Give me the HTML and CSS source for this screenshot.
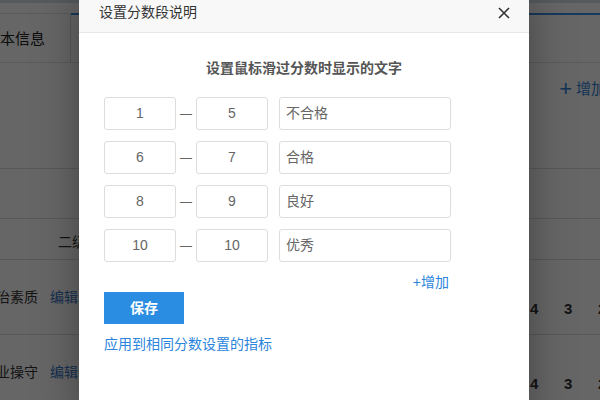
FILE: index.html
```html
<!DOCTYPE html>
<html lang="zh">
<head>
<meta charset="utf-8">
<title>设置分数段说明</title>
<link rel="stylesheet" href="styles.css">
</head>
<body>
<div class="page">
  <div class="topstrip"></div>
  <div class="tabs">
    <div class="tab">基本信息</div>
    <div class="tab-active"></div>
  </div>
  <div class="toolbar"><span class="add-main"><span class="plus">+</span>增加</span></div>
  <div class="table">
    <div class="trow thead"></div>
    <div class="trow tlevel"><span class="lvl">二级</span></div>
    <div class="trow titem">
      <span class="iname">政治素质</span><span class="edit">编辑</span>
      <span class="nums"><b>4</b><b>3</b><b>2</b></span>
    </div>
    <div class="trow titem">
      <span class="iname">职业操守</span><span class="edit">编辑</span>
      <span class="nums"><b>4</b><b>3</b><b>2</b></span>
    </div>
  </div>
</div>
<div class="overlay"></div>
<div class="modal">
  <div class="modal-head">
    <span class="modal-title">设置分数段说明</span>
    <svg class="close" width="12" height="12" viewBox="0 0 12 12"><path d="M1 1L11 11M11 1L1 11" stroke="#333" stroke-width="1.6" fill="none"/></svg>
  </div>
  <div class="modal-body">
    <div class="subtitle">设置鼠标滑过分数时显示的文字</div>
    <div class="rows">
      <div class="row"><div class="box num">1</div><span class="dash">—</span><div class="box num">5</div><div class="box txt">不合格</div></div>
      <div class="row"><div class="box num">6</div><span class="dash">—</span><div class="box num">7</div><div class="box txt">合格</div></div>
      <div class="row"><div class="box num">8</div><span class="dash">—</span><div class="box num">9</div><div class="box txt">良好</div></div>
      <div class="row"><div class="box num">10</div><span class="dash">—</span><div class="box num">10</div><div class="box txt">优秀</div></div>
    </div>
    <div class="addrow"><span class="add">+增加</span></div>
    <div class="btn">保存</div>
    <div class="apply">应用到相同分数设置的指标</div>
  </div>
</div>
</body>
</html>
```

FILE: styles.css
```css
* { box-sizing: border-box; }
html, body { margin: 0; padding: 0; }
body {
  width: 600px; height: 400px; overflow: hidden; position: relative;
  font-family: "Liberation Sans", "Noto Sans CJK SC", sans-serif;
  font-size: 14px; color: #333; background: #fff;
}
.page { width: 600px; height: 400px; overflow: hidden; }
.topstrip { height: 13px; border-top: 3px solid #d8e0e8; }
.tabs { height: 50px; display: flex; border-top: 1px solid #e4e4e4; border-bottom: 1px solid #e4e4e4; }
.tab {
  width: 86px; margin-left: -15px; margin-top: -1px; height: 50px;
  border-right: 1px solid #ddd; line-height: 52px; font-size: 15px; color: #222; padding-left: 0;
}
.tab-active { flex: 1; border-top: 2px solid #3a8ee6; margin-top: -1px; }
.toolbar { height: 105px; display: flex; justify-content: flex-end; padding-top: 16px; }
.add-main { color: #3080d8; font-size: 15px; line-height: 20px; margin-right: -6px; }
.plus { font-size: 22px; margin-right: 4px; vertical-align: -2px; }
.table { border-top: 1px solid #ddd; }
.trow { border-bottom: 1px solid #ddd; display: flex; align-items: center; }
.thead { height: 50px; }
.tlevel { height: 41px; justify-content: flex-start; }
.lvl { margin-left: 58px; margin-top: 4px; font-size: 14px; }
.titem { height: 75px; position: relative; }
.iname { margin-left: -18px; font-size: 14px; margin-top: -3px; }
.edit { color: #3a78c8; margin-left: 12px; margin-top: -3px; }
.nums { margin-left: auto; margin-right: -11px; display: flex; gap: 21px; margin-top: 22px; font-size: 15px; }
.nums b { width: 13px; }

.overlay { position: absolute; inset: 0; background: rgba(0,0,0,0.6); }
.modal {
  position: absolute; left: 79px; top: -8px; width: 450px; height: 430px;
  background: #fff; box-shadow: 0 0 40px rgba(0,0,0,0.35);
}
.modal-head {
  height: 41px; background: #f8f8f8; border-bottom: 1px solid #e8e8e8;
  display: flex; align-items: center; justify-content: space-between;
  padding: 0 19px 0 20px;
}
.modal-title { font-size: 14px; color: #333; line-height: 40px; }
.close { display: block; margin-top: 1px; }
.modal-body { padding: 25px 77px 0 25px; }
.subtitle { text-align: center; font-weight: bold; color: #555; line-height: 20px; font-size: 14px; padding-left: 52px; }
.rows { margin-top: 19px; display: flex; flex-direction: column; gap: 11px; }
.row { display: flex; height: 33px; align-items: center; }
.box { height: 33px; border: 1px solid #ddd; border-radius: 3px; line-height: 31px; color: #666; font-size: 14px; }
.num { width: 72px; text-align: center; }
.dash { width: 20px; text-align: center; color: #666; font-size: 12px; }
.txt { width: 172px; margin-left: 11px; padding-left: 6px; }
.addrow { margin-top: 10px; height: 20px; display: flex; justify-content: flex-end; width: 345px; }
.add { color: #2b85dc; line-height: 20px; font-size: 14px; }
.btn {
  width: 80px; height: 32px; background: #2b8de1; color: #fff; font-weight: bold;
  text-align: center; line-height: 32px; font-size: 14px; margin-top: 0;
}
.apply { margin-top: 10px; line-height: 20px; color: #2b85dc; font-size: 14px; }
```
